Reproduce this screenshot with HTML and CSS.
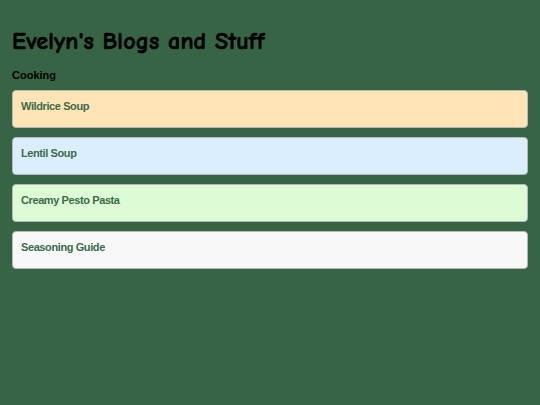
FILE: index.html
```html
<!DOCTYPE html>
<html>
<head>
<meta charset="utf-8">
<link rel="stylesheet" href="styles.css">
</head>
<body>
<main class="page">
  <h1 class="title">Evelyn's Blogs and Stuff</h1>
  <h2 class="section">Cooking</h2>
  <ul class="posts">
    <li class="card card-soup"><h3 class="card-title">Wildrice Soup</h3></li>
    <li class="card card-lentil"><h3 class="card-title">Lentil Soup</h3></li>
    <li class="card card-pasta"><h3 class="card-title">Creamy Pesto Pasta</h3></li>
    <li class="card card-guide"><h3 class="card-title">Seasoning Guide</h3></li>
  </ul>
</main>
</body>
</html>
```
FILE: styles.css
```css
html, body {
  margin: 0;
  padding: 0;
  background: #376444;
}
body {
  font-family: "Liberation Sans", Arial, sans-serif;
}
.page {
  padding: 12px 12px 12px 12px;
}
.title {
  font-family: "Comic Sans MS", "Comic Neue", cursive;
  font-size: 24px;
  font-weight: bold;
  color: #000;
  margin: 15px 0 13px;
  line-height: 28px;
  letter-spacing: 0.15px;
  -webkit-text-stroke: 0.6px #000;
}
.section {
  font-size: 11px;
  font-weight: bold;
  color: #000;
  margin: 0 0 8px;
  line-height: 14px;
}
.posts {
  list-style: none;
  margin: 0;
  padding: 0;
  display: flex;
  flex-direction: column;
  gap: 9px;
}
.card {
  box-sizing: border-box;
  height: 38px;
  border: 1px solid #b7b7b7;
  border-radius: 4px;
  padding: 8px 8px;
}
.card-soup { background: #ffe4b5; }
.card-lentil { background: #dbeefd; }
.card-pasta { background: #ddfcd5; }
.card-guide { background: #f8f8f8; }
.card-title {
  margin: 0;
  font-size: 11px;
  font-weight: bold;
  line-height: 14px;
  letter-spacing: -0.4px;
  color: #3b6b4b;
}
```
